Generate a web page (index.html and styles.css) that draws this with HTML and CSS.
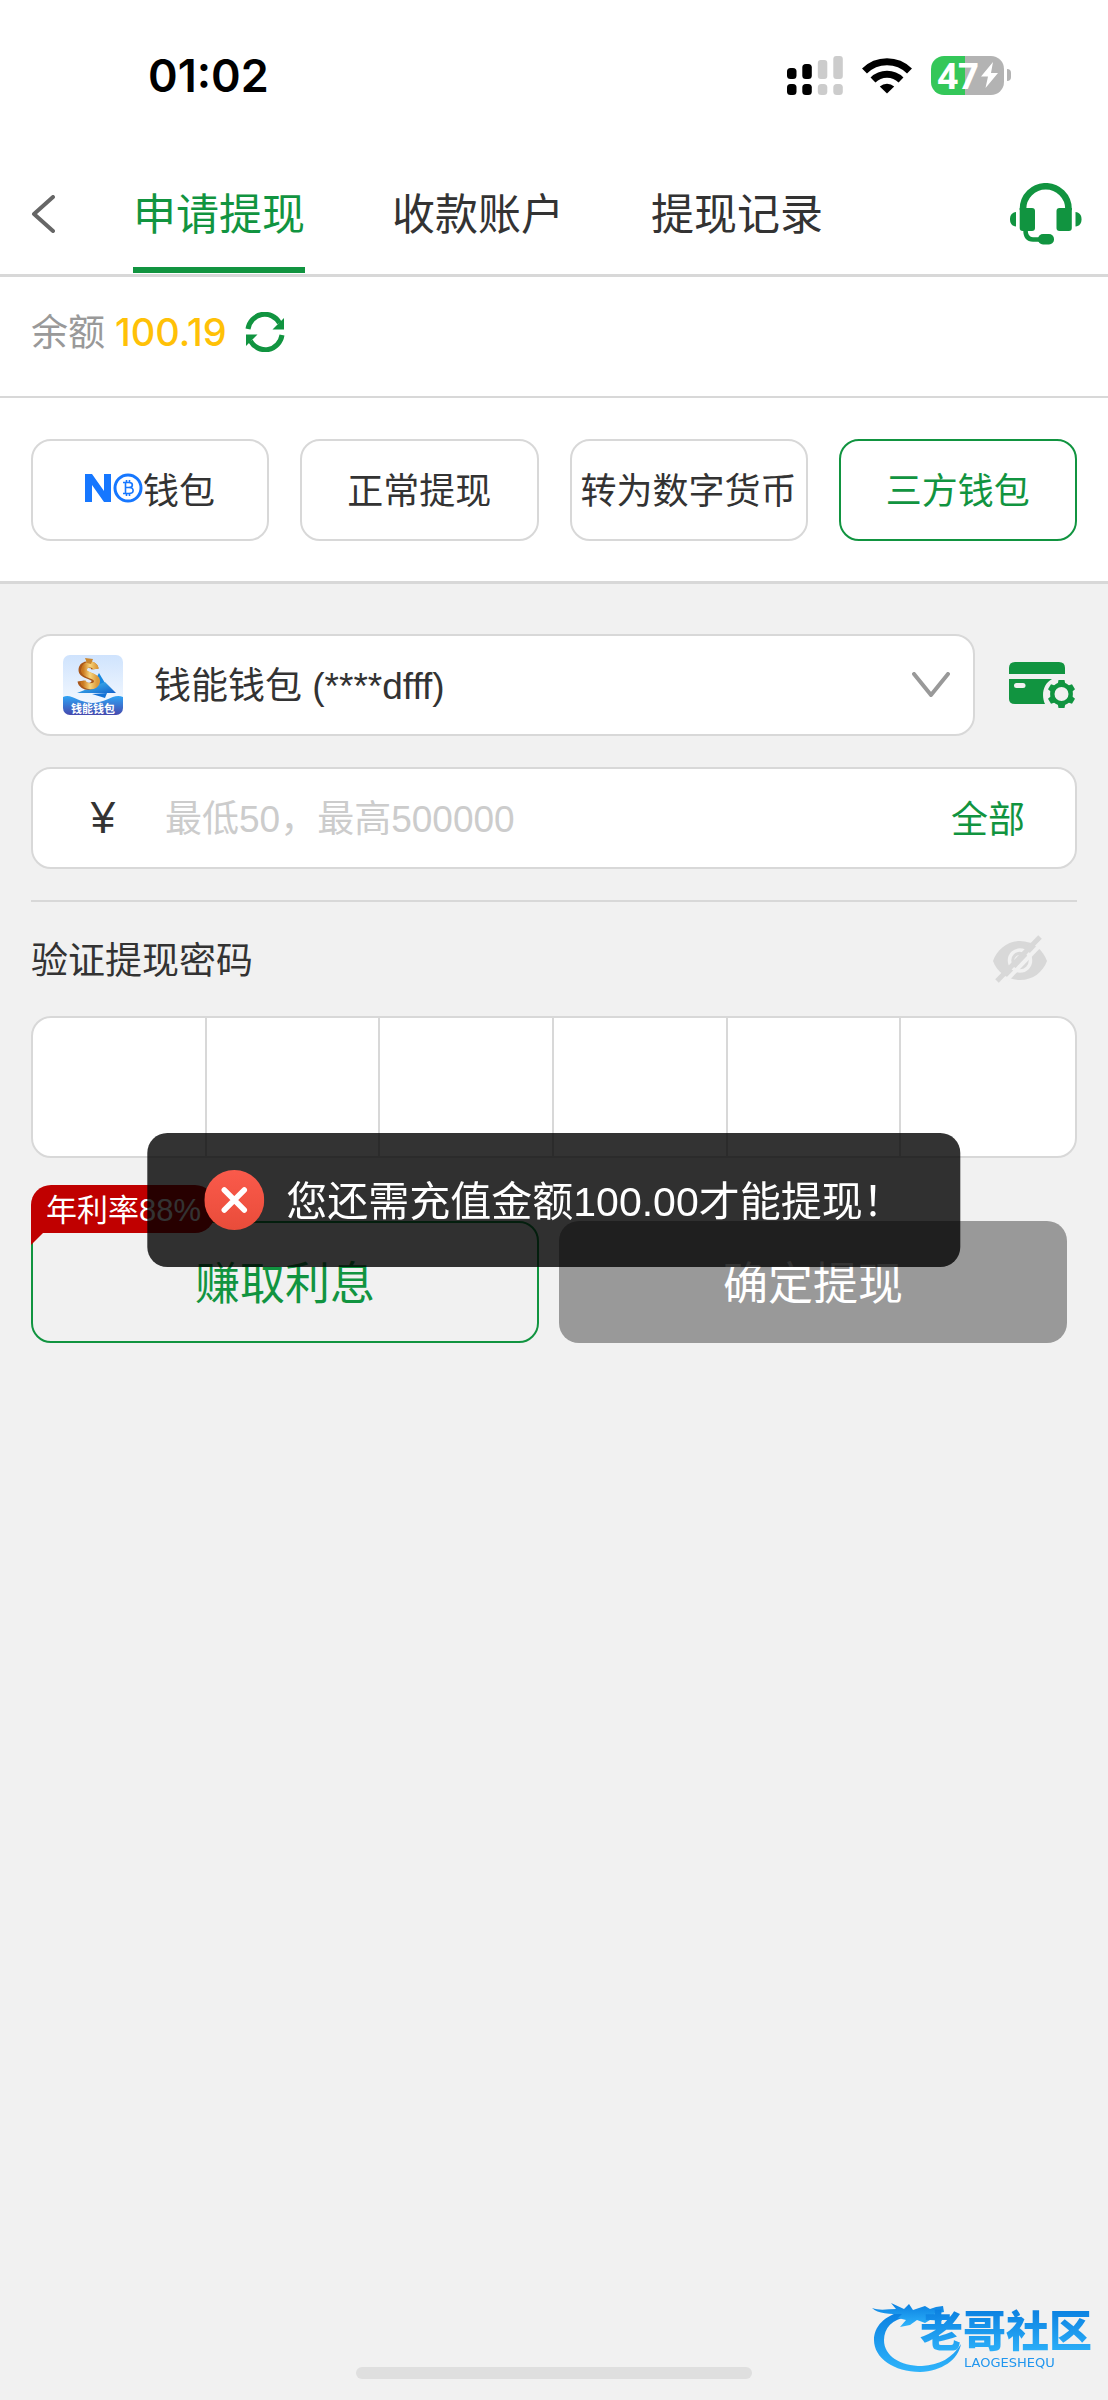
FILE: index.html
```html
<!DOCTYPE html>
<html lang="zh-CN">
<head>
    <meta charset="UTF-8">
    <meta name="viewport" content="width=device-width, initial-scale=1.0">
    <title>申请提现</title>
    <link rel="stylesheet" href="styles.css">
</head>
<body>
    <div class="status-bar">
        <span class="time">01:02</span>
        <div class="status-icons">
            <svg width="56" height="39" viewBox="0 0 56 39">
                <rect x="0" y="12" width="9.5" height="11" rx="3.5"/>
                <rect x="15.3" y="8" width="9.5" height="15" rx="3.5"/>
                <rect x="0" y="28" width="9.5" height="11" rx="3.5"/>
                <rect x="15.3" y="28" width="9.5" height="11" rx="3.5"/>
                <g fill="#ccc">
                    <rect x="30.8" y="4" width="9.5" height="19" rx="3"/>
                    <rect x="46.3" y="0" width="9.5" height="23" rx="3"/>
                    <rect x="30.8" y="28" width="9.5" height="11" rx="3.5"/>
                    <rect x="46.3" y="28" width="9.5" height="11" rx="3.5"/>
                </g>
            </svg>
            <svg width="50" height="37" viewBox="0 0 50 37">
                <path d="M2.5 14 A32 32 0 0 1 47.5 14" fill="none" stroke="#000" stroke-width="7"/>
                <path d="M11 23 A20 20 0 0 1 39 23" fill="none" stroke="#000" stroke-width="7"/>
                <path d="M25 36.5 L17.8 29.5 A10.5 10.5 0 0 1 32.2 29.5 Z"/>
            </svg>
            <div class="battery">
                <span class="battery-body">47<svg width="17" height="26" viewBox="0 0 17 26"><path d="M12 0 L0 14.5 H7 L4.500 26 L17 11 H10 Z" fill="#fff"/></svg></span>
                <span class="battery-tip"></span>
            </div>
        </div>
    </div>

    <header class="nav">
        <button type="button" class="back" aria-label="返回">
            <svg width="24" height="38" viewBox="0 0 24 38"><path d="M22 2 L3 19 L22 36" fill="none" stroke="#666" stroke-width="4" stroke-linecap="round" stroke-linejoin="round"/></svg>
        </button>
        <nav class="tabs">
            <a href="#" class="active">申请提现</a>
            <a href="#">收款账户</a>
            <a href="#">提现记录</a>
        </nav>
        <button type="button" class="service" aria-label="客服">
            <svg width="72" height="62" viewBox="0 0 72 62" fill="#119440">
                <path d="M13 27 V26 A22.700 22.700 0 0 1 58.500 26 V27" fill="none" stroke="#119440" stroke-width="6.600"/>
                <path d="M9.700 25 H22 Q25 25 25 28 V45 Q25 48 22 48 H12.700 Q9.700 48 9.700 45 Z"/>
                <path d="M61.800 25 H49.500 Q46.500 25 46.500 28 V45 Q46.500 48 49.500 48 H58.800 Q61.800 48 61.800 45 Z"/>
                <path d="M6 29 V43.500 C2 43 0 40.500 0 36.200 C0 32 2 29.500 6 29 Z"/>
                <path d="M65.500 29 V43.500 C69.500 43 71.500 40.500 71.500 36.200 C71.500 32 69.500 29.500 65.500 29 Z"/>
                <path d="M15.500 47 C15.500 53 18 56.500 23 56.500 H30" fill="none" stroke="#119440" stroke-width="4.500"/>
                <rect x="28" y="51" width="16" height="10.500" rx="5"/>
            </svg>
        </button>
    </header>

    <section class="balance">
        <span class="balance-label">余额</span>
        <span class="balance-value">100.19</span>
        <button type="button" aria-label="刷新">
            <svg width="40" height="40" viewBox="0 0 40 40" fill="#119440">
                <path d="M3 17 A17 17.500 0 0 1 34.500 11" fill="none" stroke="#119440" stroke-width="5"/>
                <path d="M39 6 V17.500 H27.500 Z"/>
                <path d="M37 23 A17 17.500 0 0 1 5.500 29" fill="none" stroke="#119440" stroke-width="5"/>
                <path d="M1 34 V22.500 H12.500 Z"/>
            </svg>
        </button>
    </section>

    <section class="methods">
        <button type="button">
            <svg width="58" height="30" viewBox="0 0 58 30" fill="#1677ff">
                <path d="M0 29 V1 H7 L19 18 V1 H26 V29 H19 L7 12 V29 Z"/>
                <circle cx="43" cy="15" r="13" fill="none" stroke="#1677ff" stroke-width="3"/>
                <path d="M38 9.500 H44 C48.500 9.500 48.500 14.500 44 14.500 H40.500 M44 14.500 C49.500 14.500 49.500 20.500 44 20.500 H38 M40.500 9.500 V20.500 M41.500 7 V9.500 M44.500 7 V9.500 M41.500 20.500 V23 M44.500 20.500 V23" fill="none" stroke="#1677ff" stroke-width="1.600"/>
            </svg>钱包
        </button>
        <button type="button">正常提现</button>
        <button type="button">转为数字货币</button>
        <button type="button" class="active">三方钱包</button>
    </section>

    <form id="withdrawForm">
        <div class="wallet-row">
            <div class="field">
                <svg class="wallet-logo" width="60" height="60" viewBox="0 0 60 60">
                    <defs>
                        <linearGradient id="sky" x1="0" y1="0" x2="0" y2="1"><stop offset="0" stop-color="#cfe3fd"/><stop offset="1" stop-color="#fbfdff"/></linearGradient>
                        <linearGradient id="wave" x1="0" y1="0" x2="0" y2="1"><stop offset="0" stop-color="#2fa4f5"/><stop offset="1" stop-color="#4649ae"/></linearGradient>
                        <linearGradient id="gold" x1="0" y1="0" x2="1" y2="0"><stop offset="0" stop-color="#c9771f"/><stop offset="0.5" stop-color="#f8d57c"/><stop offset="1" stop-color="#dc9a3c"/></linearGradient>
                        <linearGradient id="plane" x1="0" y1="0" x2="1" y2="1"><stop offset="0" stop-color="#48c4f4"/><stop offset="1" stop-color="#1262cc"/></linearGradient>
                        <clipPath id="round"><rect width="60" height="60" rx="7"/></clipPath>
                    </defs>
                    <g clip-path="url(#round)">
                        <rect width="60" height="60" fill="url(#sky)"/>
                        <path d="M36 18 L42 28 L26 36 Z" fill="#1787e0"/>
                        <path d="M14 38 L42 27 L53 38 Z" fill="url(#plane)"/>
                        <path d="M29 39 L44 38 L42 43 Z" fill="#1371d6"/>
                        <path d="M32 14 C31 8 19 8 19 15 C19 21 32 20 32 26 C32 33 19 33 18 26" fill="none" stroke="#a9571a" stroke-width="7"/>
                        <path d="M33 14 C32 8 21 8 21 15 C21 21 34 20 34 26 C34 33 21 33 20 26" fill="none" stroke="url(#gold)" stroke-width="6"/>
                        <path d="M22 3 L30 4 L28 9 L24 8 Z" fill="#c9862f"/>
                        <path d="M0 42 C8 38 14 47 29 48 C44 48 50 38 60 42 V60 H0 Z" fill="url(#wave)"/>
                        <text x="30" y="58" class="wallet-logo-text">钱能钱包</text>
                    </g>
                </svg>
                <select id="wallet" aria-label="选择钱包">
                    <option>钱能钱包 (****dfff)</option>
                </select>
                <svg class="arrow" width="38" height="26" viewBox="0 0 38 26"><path d="M2 2 L19 23 L36 2" fill="none" stroke="#999" stroke-width="4" stroke-linecap="round" stroke-linejoin="round"/></svg>
            </div>
            <button type="button" class="card-setting" aria-label="钱包设置">
                <svg width="68" height="48" viewBox="1 0 68 48" fill="#119440">
                    <path d="M1 13 V7 Q1 1 7 1 H51 Q57 1 57 7 V13 Z"/>
                    <path d="M1 18 H44 C35 23 33 34 37 43 H7 Q1 43 1 38 Z"/>
                    <rect x="6" y="22" width="11.500" height="5" rx="2.500" fill="#f1f1f1"/>
                    <circle cx="53.500" cy="33" r="9.200" fill="none" stroke="#119440" stroke-width="4.400"/>
                    <path d="M49.500 24 L50.500 19 H56.500 L57.500 24 Z M49.500 42 L50.500 47 H56.500 L57.500 42 Z M59.500 24.800 L64 23.200 L67 28.300 L63.200 31.500 Z M59.500 41.200 L64 42.800 L67 37.700 L63.200 34.500 Z M47.500 24.800 L43 23.200 L40 28.300 L43.800 31.500 Z M47.500 41.200 L43 42.800 L40 37.700 L43.800 34.500 Z"/>
                </svg>
            </button>
        </div>

        <div class="field amount">
            <label for="amount">¥</label>
            <input type="text" id="amount" inputmode="decimal" placeholder="最低50，最高500000">
            <button type="button" class="all">全部</button>
        </div>

        <div class="password-head">
            <label for="pwd1">验证提现密码</label>
            <button type="button" aria-label="显示密码">
                <svg width="54" height="48" viewBox="0 0 54 48">
                    <path d="M0 26 C4 15 14 6 27 6 C40 6 50 15 54 26 C50 37 40 45 27 45 C14 45 4 37 0 26 Z" fill="#d8d8d8"/>
                    <circle cx="27" cy="25.500" r="10.500" fill="none" stroke="#f1f1f1" stroke-width="3.500"/>
                    <path d="M22 26 A5 5 0 0 1 28 21" fill="none" stroke="#f1f1f1" stroke-width="2"/>
                    <path d="M10 49 L52 5" stroke="#f1f1f1" stroke-width="4"/>
                    <path d="M4 46 L47 2" stroke="#d8d8d8" stroke-width="5"/>
                </svg>
            </button>
        </div>
        <div class="password">
            <input type="password" id="pwd1" maxlength="1">
            <input type="password" maxlength="1" aria-label="密码第2位">
            <input type="password" maxlength="1" aria-label="密码第3位">
            <input type="password" maxlength="1" aria-label="密码第4位">
            <input type="password" maxlength="1" aria-label="密码第5位">
            <input type="password" maxlength="1" aria-label="密码第6位">
        </div>

        <div class="actions">
            <button type="button" class="earn">赚取利息</button>
            <span class="rate">年利率88%</span>
            <button type="submit" class="confirm">确定提现</button>
        </div>
    </form>

    <div class="toast" role="alert">
        <svg width="60" height="60" viewBox="0 0 60 60">
            <defs><linearGradient id="red" x1="0" y1="0" x2="0" y2="1"><stop offset="0" stop-color="#fa5a4b"/><stop offset="1" stop-color="#e94c3a"/></linearGradient></defs>
            <circle cx="30" cy="30" r="30" fill="url(#red)"/>
            <path d="M20 20 L40 40 M40 20 L20 40" stroke="#fff" stroke-width="5.500" stroke-linecap="round"/>
        </svg>
        <span>您还需充值金额100.00才能提现！</span>
    </div>

    <div class="watermark">
        <svg width="92" height="76" viewBox="0 0 92 76">
            <defs><linearGradient id="dragon" x1="0" y1="0" x2="0" y2="1"><stop offset="0" stop-color="#0a7fe0"/><stop offset="1" stop-color="#2fb4fb"/></linearGradient></defs>
            <g fill="url(#dragon)">
                <path d="M32 13 C12 17 2 29 2 42 C2 60 22 74 48 74 C70 73 86 62 89 46 C80 60 68 67 50 68 C28 68 12 58 12 42 C12 30 20 21 36 19 Z"/>
                <path d="M0 10 C8 13 16 11 24 11 L19 5 L32 11 L37 6 L41 12 L53 8 L58 11 L64 9 L71 8 L72 14 L62 16 L68 18 L70 23 L58 22 L53 25 L45 22 L38 27 L28 29 L34 22 L26 20 L30 16 C18 16 6 16 0 10 Z"/>
            </g>
        </svg>
        <div class="watermark-text">
            <strong>老哥社区</strong>
            <small>LAOGESHEQU</small>
        </div>
    </div>
    <div class="home-indicator"></div>

    <script>
        const form = document.getElementById('withdrawForm');
        const cells = document.querySelectorAll('.password input');

        form.addEventListener('submit', (e) => {
            e.preventDefault();
        });

        // Move to the next cell after each digit
        cells.forEach((cell, index) => {
            cell.addEventListener('input', () => {
                if (cell.value && cells[index + 1]) {
                    cells[index + 1].focus();
                }
            });
        });
    </script>
</body>
</html>
```
FILE: styles.css
```css
* {
    box-sizing: border-box;
}

body {
    margin: 0;
    min-height: 100vh;
    background-color: #f1f1f1;
    color: #333;
    font-family: "Liberation Sans", "Noto Sans CJK SC", sans-serif;
    font-size: 37px;
}

button,
input,
select {
    font: inherit;
    color: inherit;
    margin: 0;
    padding: 0;
    border: none;
    background: none;
}

button {
    cursor: pointer;
}

svg {
    display: block;
    flex-shrink: 0;
}

/* Status bar */
.status-bar {
    display: flex;
    justify-content: space-between;
    align-items: center;
    height: 150px;
    padding: 0 97px 0 148px;
    background-color: #fff;
}

.time {
    font-family: Inter, sans-serif;
    font-size: 45px;
    font-weight: 600;
    color: #000;
}

.status-icons {
    display: flex;
    align-items: center;
    gap: 19px;
}

.battery {
    display: flex;
    align-items: center;
    gap: 3px;
}

.battery-body {
    display: flex;
    align-items: center;
    justify-content: center;
    gap: 2px;
    width: 73px;
    height: 39px;
    border-radius: 13px;
    background: linear-gradient(to right, #34c759 47%, #b3b3b3 47%);
    color: #fff;
    font-family: "Noto Sans", sans-serif;
    font-size: 36px;
    font-weight: bold;
    line-height: 37px;
}

.battery-tip {
    width: 4px;
    height: 12px;
    border-radius: 0 4px 4px 0;
    background-color: #b3b3b3;
}

/* Top navigation */
.nav {
    display: flex;
    align-items: center;
    height: 127px;
    padding: 3px 26px 0 31px;
    border-bottom: 3px solid #d8d8d8;
    background-color: #fff;
}

.tabs {
    display: flex;
    flex: 1;
    align-self: stretch;
    gap: 87px;
    padding-left: 78px;
}

.tabs a {
    height: 120px;
    border-bottom: 6px solid transparent;
    color: #333;
    font-size: 43px;
    line-height: 125px;
    text-decoration: none;
}

.tabs .active {
    border-bottom-color: #119440;
    color: #119440;
}

/* Balance */
.balance {
    display: flex;
    align-items: center;
    height: 121px;
    padding: 0 31px 10px;
    border-bottom: 2px solid #d8d8d8;
    background-color: #fff;
}

.balance-label {
    padding-bottom: 3px;
    color: #999;
}

.balance-value {
    margin: 0 18px 0 10px;
    color: #ffc107;
    font-family: Inter, sans-serif;
    font-size: 38px;
    font-weight: 500;
}

/* Withdraw methods */
.methods {
    display: grid;
    grid-template-columns: repeat(4, 1fr);
    gap: 31px;
    padding: 41px 31px 40px;
    border-bottom: 3px solid #d8d8d8;
    background-color: #fff;
}

.methods button {
    display: flex;
    align-items: center;
    justify-content: center;
    height: 102px;
    padding-bottom: 4px;
    border: 2px solid #d8d8d8;
    border-radius: 20px;
    font-size: 36px;
    white-space: nowrap;
}

.methods .active {
    border-color: #119440;
    color: #119440;
}

/* Form */
form {
    padding: 50px 31px 0;
}

.wallet-row {
    display: flex;
    align-items: center;
    gap: 34px;
    margin-bottom: 31px;
}

.field {
    display: flex;
    flex: 1;
    align-items: center;
    height: 102px;
    border: 2px solid #d8d8d8;
    border-radius: 20px;
    background-color: #fff;
}

.wallet-row .field {
    padding: 0 23px 0 30px;
}

.wallet-logo-text {
    fill: #fff;
    font-size: 11px;
    font-weight: bold;
    text-anchor: middle;
}

select {
    flex: 1;
    height: 98px;
    padding: 3px 0 0 31px;
    appearance: none;
}

.amount label {
    width: 132px;
    padding-left: 8px;
    font-size: 44px;
    text-align: center;
}

.amount input {
    flex: 1;
    min-width: 0;
    height: 98px;
    padding-top: 3px;
}

.amount input::placeholder {
    color: #ccc;
}

.all {
    padding: 0 50px 3px;
    color: #119440;
}

.password-head {
    display: flex;
    justify-content: space-between;
    align-items: center;
    height: 116px;
    margin-top: 31px;
    padding-right: 30px;
    border-top: 2px solid #d8d8d8;
}

.password-head label {
    padding-bottom: 3px;
}

.password {
    display: grid;
    grid-template-columns: repeat(6, 1fr);
    height: 142px;
    border: 2px solid #d8d8d8;
    border-radius: 20px;
    background-color: #fff;
    overflow: hidden;
}

.password input {
    min-width: 0;
    text-align: center;
}

.password input:not(:last-child) {
    border-right: 2px solid #d8d8d8;
}

.actions {
    position: relative;
    display: grid;
    grid-template-columns: 1fr 1fr;
    gap: 20px;
    margin-top: 63px;
    padding-right: 10px;
}

.earn,
.confirm {
    height: 122px;
    padding-bottom: 4px;
    border-radius: 20px;
    font-size: 45px;
}

.earn {
    border: 2px solid #119440;
    color: #119440;
}

.confirm {
    background-color: #999;
    color: #fff;
}

.rate {
    position: absolute;
    top: -36px;
    left: 0;
    height: 48px;
    padding: 0 14px 0 15px;
    border-radius: 20px 20px 20px 0;
    background-color: #c00000;
    color: #fff;
    font-size: 31px;
    line-height: 52px;
}

.rate::after {
    content: "";
    position: absolute;
    top: 48px;
    left: 0;
    border-top: 12px solid #c00000;
    border-right: 12px solid transparent;
}

/* Toast */
.toast {
    position: fixed;
    top: 50%;
    left: 50%;
    display: flex;
    align-items: center;
    gap: 22px;
    height: 134px;
    padding: 0 57px;
    border-radius: 20px;
    background-color: rgba(0, 0, 0, 0.8);
    color: #fff;
    font-size: 41px;
    white-space: nowrap;
    transform: translate(-50%, -50%);
}

.toast span {
    padding-bottom: 4px;
}

/* Watermark */
.watermark {
    position: fixed;
    right: 16px;
    bottom: 26px;
    display: flex;
    align-items: flex-end;
}

.watermark-text {
    display: flex;
    flex-direction: column;
    margin: 0 0 4px -44px;
}

.watermark strong {
    background: linear-gradient(#0a7fe0, #2fb4fb);
    background-clip: text;
    color: transparent;
    font-size: 43px;
    font-weight: 900;
    line-height: 48px;
}

.watermark small {
    padding-left: 44px;
    color: #2196ee;
    font-family: "DejaVu Sans", sans-serif;
    font-size: 13px;
    line-height: 14px;
}

.home-indicator {
    position: fixed;
    bottom: 21px;
    left: 50%;
    width: 396px;
    height: 12px;
    border-radius: 6px;
    background-color: #dfdfdf;
    transform: translateX(-50%);
}
```
